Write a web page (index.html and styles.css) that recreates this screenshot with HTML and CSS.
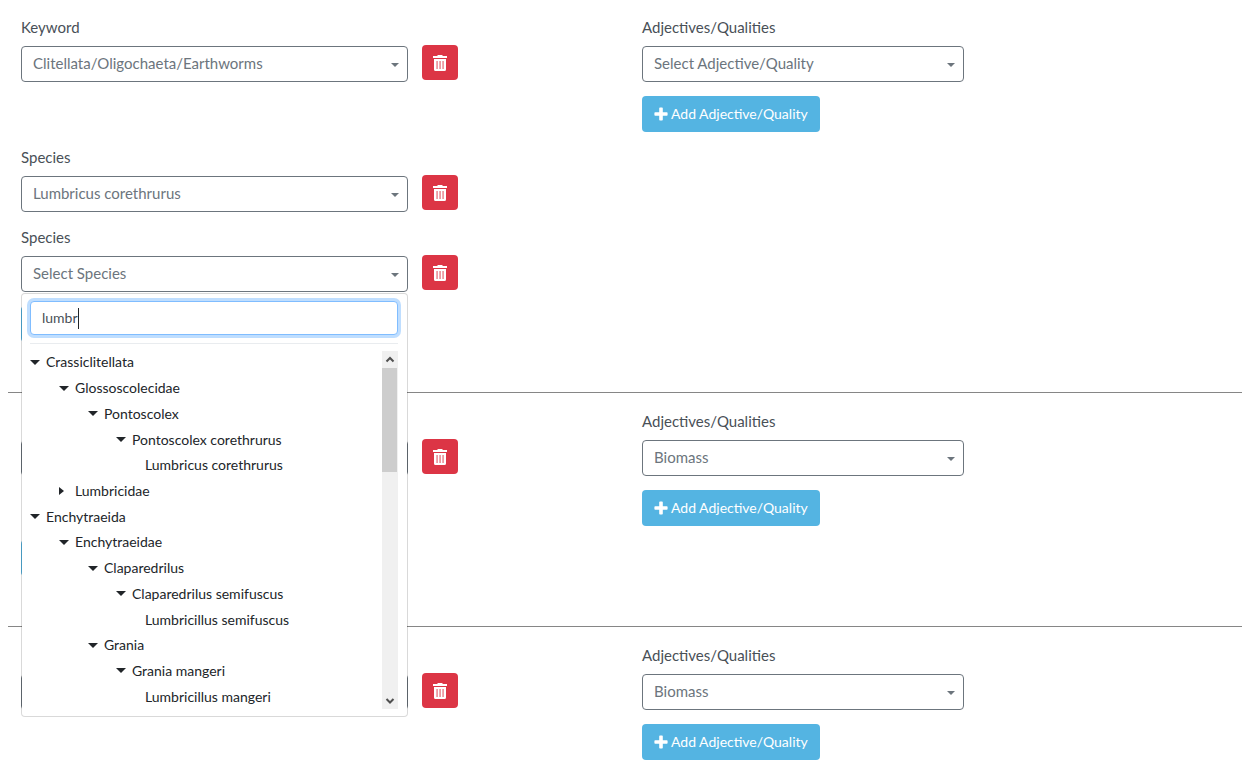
FILE: index.html
```html
<!DOCTYPE html>
<html lang="en">
<head>
<meta charset="utf-8">
<title>Keywords</title>
<link rel="stylesheet" href="styles.css">
</head>
<body>
<svg class="sprite" aria-hidden="true">
  <symbol id="trash" viewBox="0 0 14 16"><path fill="currentColor" fill-rule="evenodd" d="M4.500 0h5v1H14v2H0V1h4.500zM1 4h12v10.500a1.500 1.500 0 0 1-1.500 1.500h-9A1.500 1.500 0 0 1 1 14.500zM3.600 6v8h.9V6zm3 0v8h.9V6zm3 0v8h.9V6z"/></symbol>
  <symbol id="plus" viewBox="0 0 14 14"><path fill="currentColor" d="M6 .5h2a.8.8 0 0 1 .8.800v3.900h4a.8.8 0 0 1 .8.800v2a.8.8 0 0 1-.8.800h-4v4a.8.8 0 0 1-.8.800H6a.8.8 0 0 1-.8-.8v-4h-4a.8.8 0 0 1-.8-.8V6a.8.8 0 0 1 .8-.8h4V1.300A.8.8 0 0 1 6 .5z"/></symbol>
</svg>
<main>
  <section class="entry">
    <div class="columns">
      <div class="field">
        <label for="kw1">Keyword</label>
        <div class="row">
          <div class="control"><select id="kw1"><option>Clitellata/Oligochaeta/Earthworms</option></select></div>
          <button class="delete" type="button" aria-label="Delete keyword"><svg><use href="#trash"/></svg></button>
        </div>
      </div>
      <div class="field narrow">
        <label for="adj1">Adjectives/Qualities</label>
        <div class="control"><select id="adj1"><option>Select Adjective/Quality</option></select></div>
        <button class="add" type="button"><svg><use href="#plus"/></svg>Add Adjective/Quality</button>
      </div>
    </div>
    <div class="columns next">
      <div class="field">
        <label for="sp1">Species</label>
        <div class="row">
          <div class="control"><select id="sp1"><option>Lumbricus corethrurus</option></select></div>
          <button class="delete" type="button" aria-label="Delete species"><svg><use href="#trash"/></svg></button>
        </div>
      </div>
    </div>
    <div class="columns next">
      <div class="field">
        <label for="sp2">Species</label>
        <div class="row">
          <div class="control">
            <select id="sp2"><option>Select Species</option></select>
            <div class="menu">
              <div class="searchbox">
                <input class="search" type="text" value="lumbr" aria-label="Search species">
                <span class="caret"></span>
              </div>
              <div class="results">
                <ul class="tree">
                  <li class="l0 open">Crassiclitellata</li>
                  <li class="l1 open">Glossoscolecidae</li>
                  <li class="l2 open">Pontoscolex</li>
                  <li class="l3 open">Pontoscolex corethrurus</li>
                  <li class="leaf">Lumbricus corethrurus</li>
                  <li class="l1 closed">Lumbricidae</li>
                  <li class="l0 open">Enchytraeida</li>
                  <li class="l1 open">Enchytraeidae</li>
                  <li class="l2 open">Claparedrilus</li>
                  <li class="l3 open">Claparedrilus semifuscus</li>
                  <li class="leaf">Lumbricillus semifuscus</li>
                  <li class="l2 open">Grania</li>
                  <li class="l3 open">Grania mangeri</li>
                  <li class="leaf">Lumbricillus mangeri</li>
                </ul>
                <div class="scrollbar">
                  <svg viewBox="0 0 16 17"><path d="M4.500 10.500 8 7l3.500 3.500" /></svg>
                  <div class="thumb"></div>
                  <svg viewBox="0 0 16 17"><path d="M4.500 7 8 10.500 11.500 7" /></svg>
                </div>
              </div>
            </div>
          </div>
          <button class="delete" type="button" aria-label="Delete species"><svg><use href="#trash"/></svg></button>
        </div>
      </div>
    </div>
    <div class="more"><button class="add" type="button" aria-label="Add species"></button></div>
  </section>

  <section class="entry">
    <div class="columns">
      <div class="field unlabelled">
        <div class="row">
          <div class="control"><select aria-label="Keyword"></select></div>
          <button class="delete" type="button" aria-label="Delete keyword"><svg><use href="#trash"/></svg></button>
        </div>
      </div>
      <div class="field narrow">
        <label for="adj2">Adjectives/Qualities</label>
        <div class="control"><select id="adj2"><option>Biomass</option></select></div>
        <button class="add" type="button"><svg><use href="#plus"/></svg>Add Adjective/Quality</button>
      </div>
    </div>
    <div class="more"><button class="add" type="button" aria-label="Add species"></button></div>
  </section>

  <section class="entry">
    <div class="columns">
      <div class="field unlabelled">
        <div class="row">
          <div class="control"><select aria-label="Keyword"></select></div>
          <button class="delete" type="button" aria-label="Delete keyword"><svg><use href="#trash"/></svg></button>
        </div>
      </div>
      <div class="field narrow">
        <label for="adj3">Adjectives/Qualities</label>
        <div class="control"><select id="adj3"><option>Biomass</option></select></div>
        <button class="add" type="button"><svg><use href="#plus"/></svg>Add Adjective/Quality</button>
      </div>
    </div>
  </section>
</main>
</body>
</html>
```
FILE: styles.css
```css
* { box-sizing: border-box; }
body {
  margin: 0;
  background: #fff;
  color: #495057;
  font: 15px/20px Lato, Roboto, sans-serif;
}
.sprite { display: none; }
main { padding: 17px 0 6px 8px; }
.entry + .entry {
  border-top: 1px solid #868686;
  padding-top: 18px;
}
.columns {
  display: grid;
  grid-template-columns: 1fr 1fr;
  margin-left: -8px;
}
.columns.next { margin-top: 15px; }
.field {
  display: flex;
  flex-direction: column;
  align-items: flex-start;
  padding-left: 21px;
}
.field.unlabelled { padding-top: 28px; }
label { margin-bottom: 8px; }
.row {
  display: flex;
  align-items: flex-start;
  gap: 14px;
  width: 72.8%;
}
.control {
  position: relative;
  flex: 1;
  padding-top: 1px;
}
.narrow .control { flex: none; width: 53.7%; }
select {
  appearance: none;
  display: block;
  width: 100%;
  height: 36px;
  padding: 0 11px 2px;
  border: 1px solid #6c757d;
  border-radius: 4px;
  background: #fff;
  color: #6c757d;
  font: inherit;
}
.control::after {
  content: "";
  position: absolute;
  top: 18px;
  right: 9px;
  border: 4px solid transparent;
  border-top-color: #6c757d;
  border-bottom: 0;
}
button {
  border: 0;
  border-radius: 4px;
  color: #fff;
  font: inherit;
}
.delete {
  display: flex;
  align-items: center;
  justify-content: center;
  width: 36px;
  height: 35px;
  padding: 0;
  background: #dc3545;
}
.delete svg { width: 14px; height: 16px; }
.add {
  display: flex;
  align-items: center;
  gap: 3px;
  height: 36px;
  margin-top: 14px;
  padding: 0 12px 1px;
  background: #54b4e2;
  font-size: 14px;
}
.add svg { width: 14px; height: 14px; }
.more {
  padding: 0 0 50px 13px;
}
.more .add { width: 120px; }

/* species picker */
.menu {
  position: absolute;
  z-index: 1;
  top: 38px;
  left: 0;
  right: 0;
  padding: 7px 9px 6px 8px;
  border: 1px solid rgba(0, 0, 0, .15);
  border-radius: 4px;
  background: #fff;
  background-clip: padding-box;
  color: #212529;
  font-size: 14px;
}
.searchbox { position: relative; }
.search {
  display: block;
  width: 100%;
  height: 34px;
  padding: 0 11px 2px;
  border: 1px solid #80bdff;
  border-radius: 4px;
  outline: 0;
  box-shadow: 0 0 0 3px #bfdeff;
  color: #495057;
  font: inherit;
}
.caret {
  position: absolute;
  top: 7px;
  left: 48px;
  width: 1px;
  height: 21px;
  background: #212529;
}
.results {
  display: flex;
  margin-top: 8px;
  padding-top: 6px;
  border-top: 1px solid #e9ecef;
}
.tree {
  display: flex;
  flex-direction: column;
  flex: 1;
  height: 360px;
  margin: 0;
  padding: 0;
  list-style: none;
}
.tree li {
  display: flex;
  align-items: center;
  flex: 1;
  padding-bottom: 1px;
}
.open::before, .closed::before {
  content: "";
  border: 0 solid transparent;
}
.open::before {
  margin-right: 6px;
  border-width: 5px 5px 0;
  border-top-color: #212529;
}
.closed::before {
  margin-right: 11px;
  border-width: 4px 0 4px 5px;
  border-left-color: #212529;
}
.l1 { padding-left: 29px; }
.l2 { padding-left: 58px; }
.l3 { padding-left: 86px; }
.leaf { padding-left: 115px; }
.scrollbar {
  display: flex;
  flex-direction: column;
  width: 16px;
  margin: 1px 0;
  background: #f0f0f0;
}
.scrollbar svg {
  height: 17px;
  fill: none;
  stroke: #505050;
  stroke-width: 2;
}
.thumb {
  width: 15px;
  height: 104px;
  margin-bottom: auto;
  background: #cdcdcd;
}
```
